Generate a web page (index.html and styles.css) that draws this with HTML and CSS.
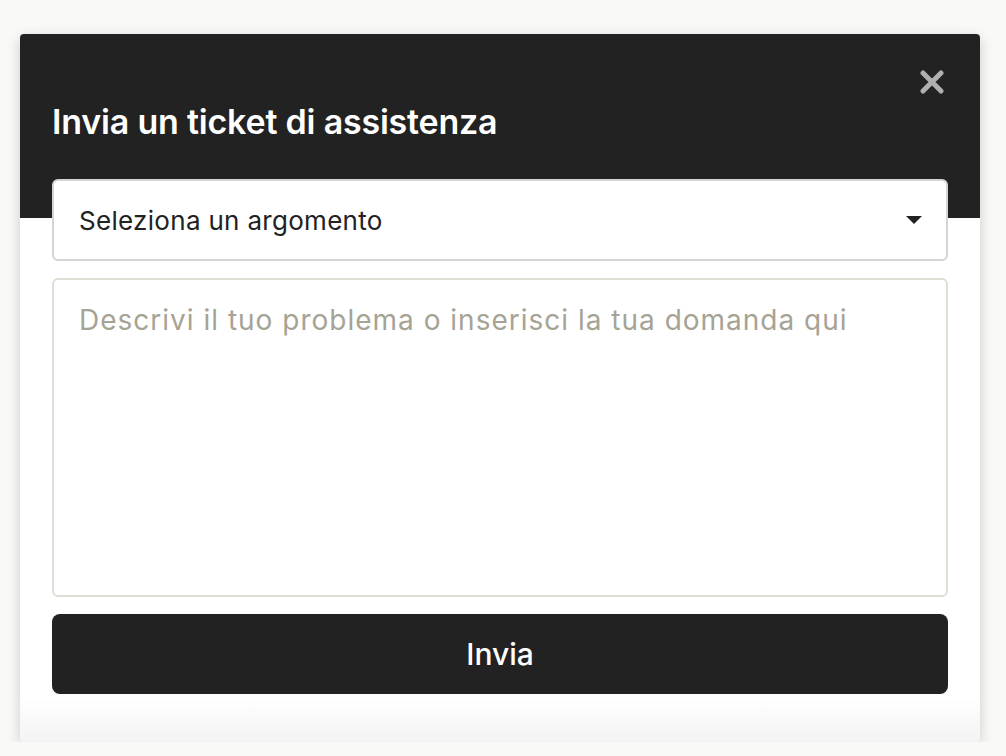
FILE: index.html
```
<!DOCTYPE html>
<html lang="it">
<head>
    <meta charset="UTF-8">
    <meta name="viewport" content="width=device-width, initial-scale=1.0">
    <title>Invia un ticket di assistenza</title>
    <link rel="stylesheet" href="styles.css">
</head>
<body>
    <div class="modal">
        <div class="modal-header">
            <button class="close-btn" aria-label="Chiudi">
                <svg width="24" height="24" viewBox="0 0 24 24">
                    <path d="M3 3 L21 21 M21 3 L3 21" stroke="#b0b0b0" stroke-width="5" stroke-linecap="round"/>
                </svg>
            </button>
            <h1>Invia un ticket di assistenza</h1>
        </div>
        <div class="modal-body">
            <div class="select-box">
                <span>Seleziona un argomento</span>
                <span class="caret"></span>
            </div>
            <textarea placeholder="Descrivi il tuo problema o inserisci la tua domanda qui"></textarea>
            <button class="submit-btn">Invia</button>
        </div>
    </div>
</body>
</html>
```

FILE: styles.css
```
body {
    background: #f9f9f7;
    font-family: Inter, "Noto Sans", sans-serif;
    margin: 0;
    padding: 34px 26px 0 20px;
}

.modal {
    background: #fff;
    border-radius: 4px;
    box-shadow: 0 4px 14px rgba(0, 0, 0, 0.18);
    overflow: hidden;
}

.modal-header {
    background: #222;
    height: 184px;
    padding: 0 32px;
    position: relative;
}

.modal-header h1 {
    color: #fff;
    font-size: 34px;
    font-weight: 600;
    margin: 0;
    padding-top: 67px;
    letter-spacing: -0.2px;
}

.close-btn {
    position: absolute;
    top: 36px;
    right: 36px;
    background: none;
    border: none;
    padding: 0;
    width: 24px;
    height: 24px;
    cursor: pointer;
}

.modal-body {
    margin-top: -39px;
    padding: 0 32px 48px;
    display: flex;
    flex-direction: column;
    gap: 17px;
    background: linear-gradient(to bottom, #fff calc(100% - 44px), #f3f3f3);
}

.select-box {
    height: 82px;
    box-sizing: border-box;
    border: 2px solid #d4d4d4;
    border-radius: 6px;
    background: #fff;
    display: flex;
    align-items: center;
    justify-content: space-between;
    padding: 0 24px 0 25px;
    font-size: 26px;
    letter-spacing: 0.3px;
    color: #222;
    position: relative;
}

.caret {
    width: 0;
    height: 0;
    border-left: 8px solid transparent;
    border-right: 8px solid transparent;
    border-top: 8px solid #222;
}

textarea {
    height: 319px;
    box-sizing: border-box;
    border: 2px solid #e0ddd5;
    border-radius: 6px;
    padding: 23px 25px 20px;
    font-family: Inter, "Noto Sans", sans-serif;
    font-size: 28px;
    letter-spacing: 1px;
    resize: none;
}

textarea::placeholder {
    color: #a6a395;
}

.submit-btn {
    height: 80px;
    background: #222;
    color: #fff;
    border: none;
    border-radius: 8px;
    font-family: Inter, "Noto Sans", sans-serif;
    font-size: 30px;
    font-weight: 500;
    cursor: pointer;
}
```
